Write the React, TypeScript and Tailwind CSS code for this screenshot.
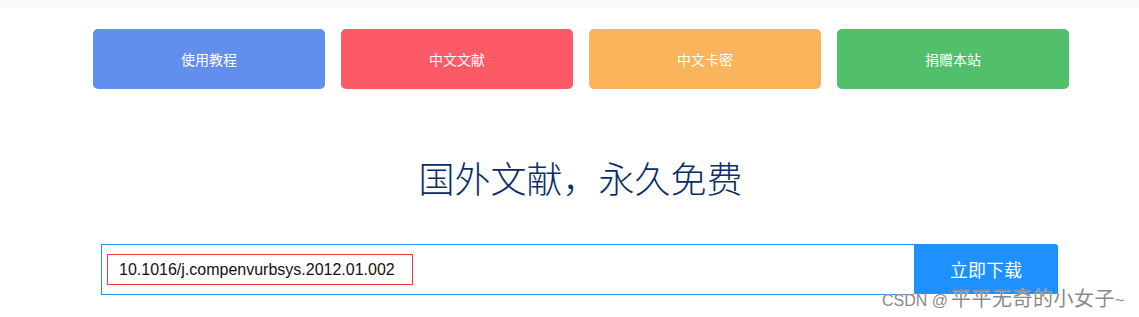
import React from 'react';

const links = [
  { label: '使用教程', color: 'bg-[#628eed]' },
  { label: '中文文献', color: 'bg-[#fb5a66]' },
  { label: '中文卡密', color: 'bg-[#fab45c]' },
  { label: '捐赠本站', color: 'bg-[#52bf6b]' },
];

export default function App() {
  return (
    <div className="relative h-[317px] w-[1139px] bg-white font-['Microsoft_YaHei','Noto_Sans_CJK_SC',sans-serif]">
      <div className="h-2 bg-[#fafafa]" />

      {/* nav buttons */}
      <div className="ml-[93px] mt-[21px] flex gap-4">
        {links.map((l) => (
          <a
            key={l.label}
            className={`flex h-[60px] w-[232px] items-center justify-center rounded-[5px] text-[14px] text-white ${l.color}`}
          >
            {l.label}
          </a>
        ))}
      </div>

      <h1 className="mt-[64px] pl-[22px] text-center text-[36px] font-light leading-[48px] text-[#0b2c66]">
        国外文献，永久免费
      </h1>

      {/* search */}
      <div className="ml-[101px] mt-[43px] flex h-[51px] w-[957px]">
        <div className="flex flex-1 items-center border border-r-0 border-solid border-[color:#1e90ff] pl-[5px]">
          <div className="flex h-[31px] w-[306px] items-center border border-solid border-[color:#f03c3c] pl-[11px] font-['Liberation_Sans',sans-serif] text-[16px] text-[#111]">
            10.1016/j.compenvurbsys.2012.01.002
          </div>
        </div>
        <button className="flex h-[50px] w-[144px] items-center justify-center rounded-tr-[3px] bg-[#1e90ff] text-[18px] text-white">
          立即下载
        </button>
      </div>

      <div className="absolute left-[882px] top-[287px] font-['Liberation_Sans',sans-serif] text-[16px] leading-[22px] text-[#8a8a8a] [text-shadow:0_0_1px_#fff]">
        CSDN @<span className="ml-[3px] font-['Noto_Sans_CJK_SC',sans-serif] text-[20px] tracking-[0.5px]">平平无奇的小女子</span>~
      </div>
    </div>
  );
}
